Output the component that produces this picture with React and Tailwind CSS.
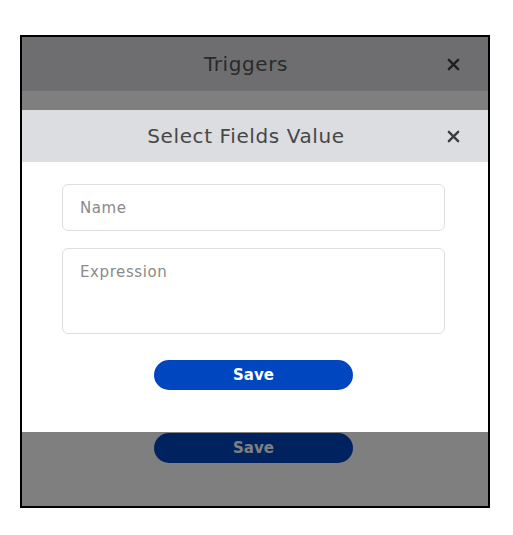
import React from 'react';

function CloseIcon({ className }) {
  return (
    <svg viewBox="0 0 14 14" className={className} fill="none" stroke="currentColor" strokeWidth="2.6" strokeLinecap="round">
      <path d="M2 2 L12 12 M12 2 L2 12" />
    </svg>
  );
}

function Header({ title, className }) {
  return (
    <div className={`flex items-center ${className}`}>
      <div className="flex-1 pl-[29px] text-center text-[20px] tracking-[0.6px]">{title}</div>
      <button className="mr-[23px] flex h-[24px] w-[24px] items-center justify-center text-[#3d3d3d]">
        <CloseIcon className="h-[13px] w-[13px]" />
      </button>
    </div>
  );
}

export default function App() {
  return (
    <div className="min-h-screen bg-white pl-[20px] pt-[35px]" style={{ fontFamily: '"DejaVu Sans", Verdana, sans-serif' }}>
      <div className="relative h-[473px] w-[470px] overflow-hidden border-2 border-black">
        {/* outer Triggers dialog, dimmed */}
        <div className="flex h-full flex-col bg-white">
          <Header title="Triggers" className="h-[54px] bg-[#dcdde0] text-[#555]" />
          <div className="flex flex-1 flex-col items-start pl-[132px] pt-[342px]">
            <button className="h-[30px] w-[199px] rounded-full bg-[#0047bf] text-[15px] font-bold text-white">Save</button>
          </div>
        </div>
        <div className="absolute inset-0 bg-black/50" />

        {/* nested dialog */}
        <div className="absolute left-0 right-0 top-[73px] bg-white">
          <Header title="Select Fields Value" className="h-[52px] bg-[#dcdde0] text-[#474747]" />
          <div className="flex flex-col items-start pl-[40px] pb-[42px] pt-[22px]">
            <input
              placeholder="Name"
              className="h-[47px] w-[383px] rounded-[6px] border border-[#dedede] px-[17px] text-[15px] tracking-[0.6px] text-[#555] outline-none placeholder:text-[#8a8a8a]"
            />
            <textarea
              placeholder="Expression"
              className="mt-[17px] h-[86px] w-[383px] resize-none rounded-[6px] border border-[#dedede] px-[17px] pt-[12px] text-[15px] tracking-[0.6px] text-[#555] outline-none placeholder:text-[#8a8a8a]"
            />
            <button className="ml-[92px] mt-[26px] h-[30px] w-[199px] rounded-full bg-[#0047bf] text-[15px] font-bold text-white">Save</button>
          </div>
        </div>
      </div>
    </div>
  );
}
